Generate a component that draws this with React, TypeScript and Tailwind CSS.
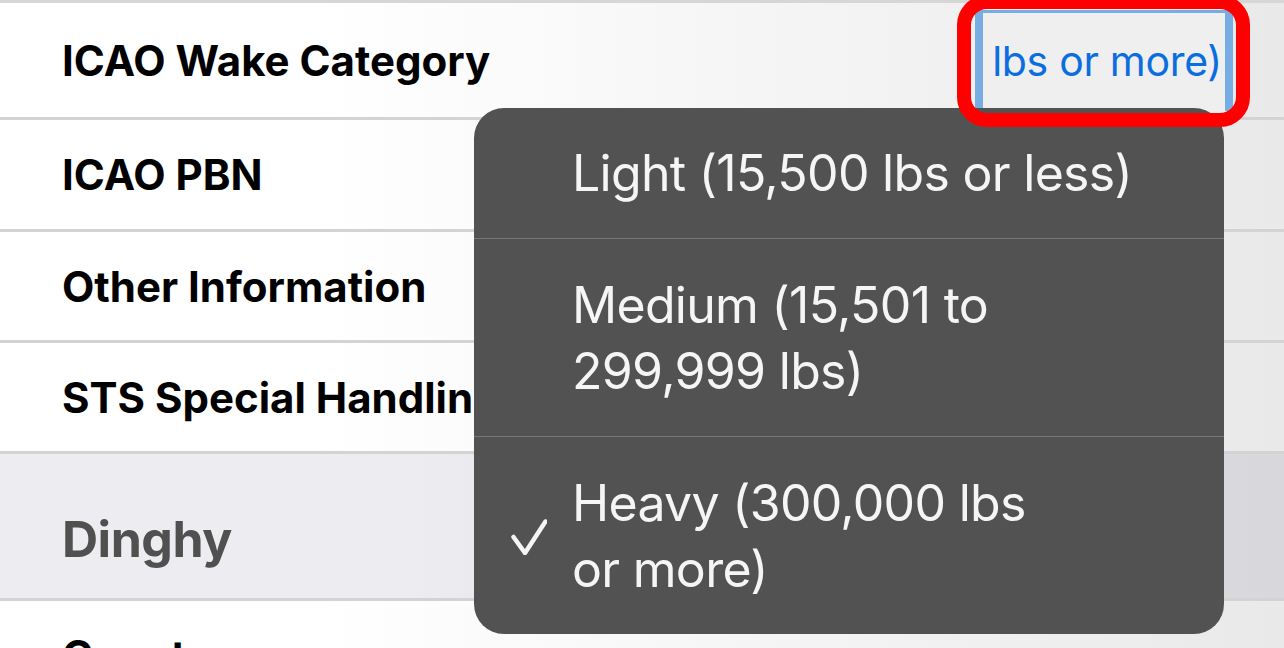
import React from 'react';

const rowBg = 'bg-linear-to-r from-white from-25% via-[#f5f5f5] via-60% to-[#e9e9e9]';

function Row({ label, h, children }: { label: string; h: string; children?: React.ReactNode }) {
  return (
    <div className={`flex items-center justify-between border-b-[3px] border-[#d3d3d3] pl-[62px] ${h} ${rowBg}`}>
      <span className="text-[42px] font-bold text-black whitespace-nowrap">{label}</span>
      {children}
    </div>
  );
}

function Check() {
  return (
    <svg width="36" height="36" viewBox="0 0 36 36" fill="none">
      <path d="M2.5 18 L14 34 L34.5 2.5" stroke="#f5f5f5" strokeWidth="4.5" strokeLinecap="round" strokeLinejoin="round" />
    </svg>
  );
}

const options = [
  { lines: ['Light (15,500 lbs or less)'], h: 'h-[131px]', checked: false },
  { lines: ['Medium (15,501 to', '299,999 lbs)'], h: 'h-[198px]', checked: false },
  { lines: ['Heavy (300,000 lbs', 'or more)'], h: 'h-[197px]', checked: true },
];

export default function App() {
  return (
    <div className="relative h-[648px] w-[1284px] overflow-hidden bg-white font-['Inter',sans-serif]">
      <div className="border-t-[3px] border-[#d6d6d6]">
        <Row label="ICAO Wake Category" h="h-[117px]">
          <div className="mr-[51px] flex h-[101px] w-[258px] items-center justify-end overflow-hidden whitespace-nowrap border-x-8 border-t-[3px] border-[#78ade3] bg-[#efefef] pr-[3px]">
            <span className="text-[41px] tracking-[-0.3px] text-[#0b6ee0]">lbs or more)</span>
          </div>
        </Row>
        <Row label="ICAO PBN" h="h-[112px]" />
        <Row label="Other Information" h="h-[111px]" />
        <Row label="STS Special Handling" h="h-[111px]" />
        <div className="h-[147px] border-b-[3px] border-[#d3d3d3] bg-linear-to-r from-[#ededf1] from-30% to-[#d8d8dc] pl-[62px] pt-[60px]">
          <span className="text-[50px] font-bold leading-none tracking-[-0.5px] text-[#505050]">Dinghy</span>
        </div>
        <Row label="Count" h="h-[111px]" />
      </div>

      {/* popup menu */}
      <div className="absolute left-[474px] top-[108px] flex w-[750px] flex-col overflow-hidden rounded-[30px] bg-[#525252] divide-y divide-[#767676]">
        {options.map((o, i) => (
          <div key={i} className={`flex items-center ${o.h}`}>
            <div className="flex w-[98px] justify-end pr-[25px] pt-[3px]">
              {o.checked && <Check />}
            </div>
            <div className="text-[50px] leading-[66px] tracking-[-0.7px] text-[#f5f5f5] whitespace-nowrap">
              {o.lines.map((l, j) => (
                <div key={j}>{l}</div>
              ))}
            </div>
          </div>
        ))}
      </div>

      {/* red annotation */}
      <div className="absolute left-[957px] top-[-5px] h-[132px] w-[293px] rounded-[30px] border-[14px] border-[#ff0000]" />
    </div>
  );
}
